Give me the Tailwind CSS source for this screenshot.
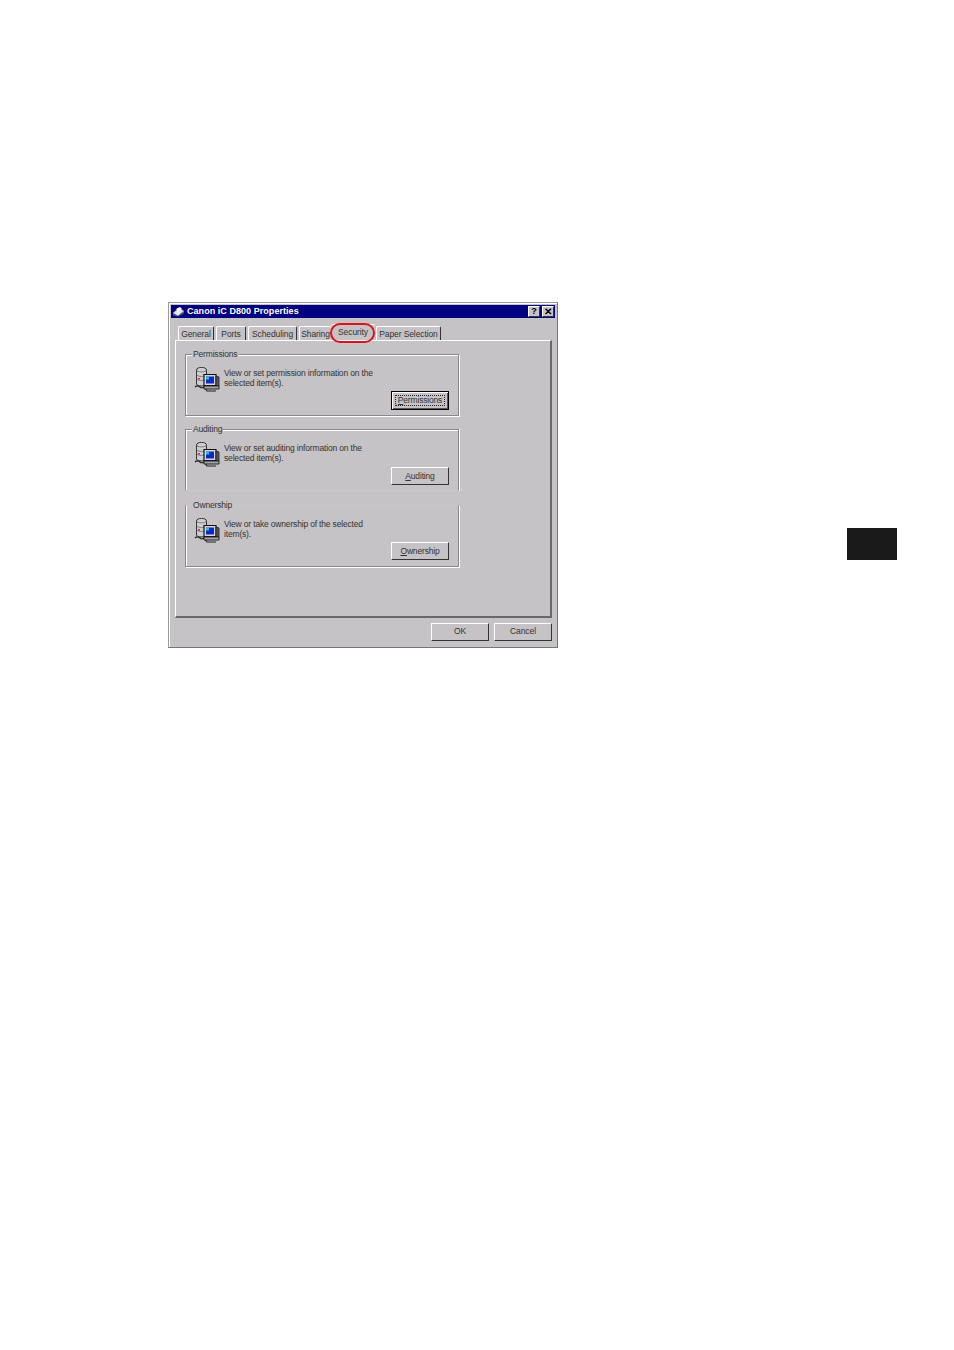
<!DOCTYPE html>
<html lang="en">
<head>
  <meta charset="UTF-8" />
  <meta name="viewport" content="width=device-width, initial-scale=1.0"/>
  <title>Canon iC D800 Properties</title>
  <script src="https://cdn.jsdelivr.net/npm/@tailwindcss/browser@4"></script>
</head>
<body class="bg-white font-['Liberation_Sans',sans-serif] text-[#333]">
  <svg class="hidden">
    <symbol id="sec" viewBox="0 0 26 26">
      <path d="M1 20c2-2 4-1 5 0s3 1 4 0l3 4h9" fill="none" stroke="#222" stroke-width="1.2"/>
      <path d="M2.500 3c0-3.500 10-3.500 10 0v14c0 2.500-10 2.500-10 0z" fill="#cfcdd1" stroke="#333" stroke-width="1"/>
      <path d="M2.500 3c0 2.500 10 2.500 10 0M2.500 8c3 2 7 2 10 0M2.500 12c3 2 7 2 10 0" fill="none" stroke="#666" stroke-width=".8"/>
      <rect x="4" y="11" width="2" height="1.500" fill="#c03050"/>
      <path d="M10 7.500h12v11H10z" fill="#d8d6da" stroke="#111" stroke-width="1.200"/>
      <rect x="12" y="9.500" width="8" height="7" fill="#0a28c8"/>
      <rect x="12" y="9.500" width="3" height="3" fill="#30b8d8"/>
      <path d="M22 9l3 1v9h-3z" fill="#555" stroke="#222" stroke-width=".8"/>
      <path d="M10 19h15v3H10z" fill="#a8a6aa" stroke="#222" stroke-width="1"/>
    </symbol>
  </svg>

  <div class="flex items-start w-[954px] h-[1350px] overflow-hidden">
    <!-- dialog -->
    <div class="mt-[302px] ml-[168px] w-[390px] h-[346px] shrink-0 bg-[#c5c3c6] border border-[#9a989c] border-r-[#77757a] border-b-[#77757a] shadow-[inset_1px_1px_0_#fff] p-[2px] pb-0">
      <div class="h-[13px] bg-[#000080] flex items-center pl-[1px] pr-[1px]">
        <svg class="w-[13px] h-[12px] mr-[2px]" viewBox="0 0 13 12">
          <path d="M1 7l6-5 5 3-6 5z" fill="#e8e8e8" stroke="#888" stroke-width=".7"/>
          <path d="M4 3l4-2 2 2-4 2z" fill="#fff"/>
          <path d="M1 8l5 3 6-5v1l-6 4-5-2z" fill="#8a9a50"/>
        </svg>
        <span class="text-white font-bold text-[9px] leading-none tracking-[0.05px]">Canon iC D800 Properties</span>
        <div class="ml-auto flex items-center">
          <span class="w-[12px] h-[11px] bg-[#c5c3c6] border border-white border-r-[#333] border-b-[#333] text-black font-bold text-[9px] leading-[9px] text-center">?</span>
          <span class="w-[12px] h-[11px] ml-[2px] bg-[#c5c3c6] border border-white border-r-[#333] border-b-[#333] text-black font-bold text-[10px] leading-[9px] text-center">✕</span>
        </div>
      </div>

      <div class="pl-[4px] pr-[3px]">
        <!-- tabs -->
        <div class="relative flex items-end h-[22px] pl-[3px] text-[8.5px] tracking-[-0.1px] leading-none whitespace-nowrap">
          <span class="w-[36px] h-[14px] mr-[2px] border-l border-t border-white border-r border-r-[#333] rounded-t-[2px] pt-[3px] text-center">General</span>
          <span class="w-[30px] h-[14px] mr-[2px] border-l border-t border-white border-r border-r-[#333] rounded-t-[2px] pt-[3px] text-center">Ports</span>
          <span class="w-[49px] h-[14px] mr-[2px] border-l border-t border-white border-r border-r-[#333] rounded-t-[2px] pt-[3px] text-center">Scheduling</span>
          <span class="w-[32px] h-[14px] border-l border-t border-white rounded-t-[2px] pt-[3px] text-center">Sharing</span>
          <span class="w-[44px] h-[16px] mr-[1px] border-t border-white rounded-t-[2px] pt-[3px] text-center">Security</span>
          <span class="w-[65px] h-[14px] border-l border-t border-white border-r border-r-[#333] rounded-t-[2px] pt-[3px] text-center">Paper Selection</span>
          <!-- red marker round the Security tab -->
          <span class="absolute left-[155px] top-[5px] w-[45px] h-[20px] rounded-full border-2 border-[#e0101c]"></span>
        </div>

        <!-- panel -->
        <div class="h-[278px] border-l border-t border-white border-r-2 border-r-[#6a686d] border-b-2 border-b-[#6a686d] pt-[13px] pl-[9px] flex flex-col text-[8.5px] tracking-[-0.17px] leading-[10px]">
          <div class="relative w-[274px] h-[62px] shrink-0 border border-[#8a888c] shadow-[inset_1px_1px_0_#fff,1px_1px_0_#fff]">
            <span class="absolute -top-[6px] left-[6px] px-[1px] bg-[#c5c3c6]">Permissions</span>
            <div class="flex pl-[8px] pt-[12px]">
              <svg class="w-[26px] h-[26px] shrink-0"><use href="#sec"/></svg>
              <p class="ml-[4px] mt-[1px]">View or set permission information on the<br>selected item(s).</p>
            </div>
            <div class="absolute left-[205px] top-[36px] w-[58px] h-[19px] border border-black bg-[#c5c3c6] shadow-[inset_1px_1px_0_#fff,inset_-1px_-1px_0_#55535a] p-[3px]">
              <div class="h-full border border-dotted border-[#222] text-center leading-[9px]"><u>P</u>ermissions</div>
            </div>
          </div>

          <div class="relative w-[274px] h-[62px] shrink-0 mt-[13px] border border-[#8a888c] border-b-[#c9c7cb] shadow-[inset_1px_1px_0_#fff,1px_0_0_#fff]">
            <span class="absolute -top-[6px] left-[6px] px-[1px] bg-[#c5c3c6]">Auditing</span>
            <div class="flex pl-[8px] pt-[12px]">
              <svg class="w-[26px] h-[26px] shrink-0"><use href="#sec"/></svg>
              <p class="ml-[4px] mt-[1px]">View or set auditing information on the<br>selected item(s).</p>
            </div>
            <div class="absolute left-[205px] top-[37px] w-[58px] h-[18px] border border-white border-r-[#333] border-b-[#333] bg-[#c5c3c6] text-center leading-[16px]"><u>A</u>uditing</div>
          </div>

          <div class="relative w-[274px] h-[62px] shrink-0 mt-[14px] border border-[#8a888c] border-t-[#c9c7cb] shadow-[inset_1px_0_0_#fff,1px_1px_0_#fff]">
            <span class="absolute -top-[6px] left-[6px] px-[1px]">Ownership</span>
            <div class="flex pl-[8px] pt-[12px]">
              <svg class="w-[26px] h-[26px] shrink-0"><use href="#sec"/></svg>
              <p class="ml-[4px] mt-[1px]">View or take ownership of the selected<br>item(s).</p>
            </div>
            <div class="absolute left-[205px] top-[36px] w-[58px] h-[18px] border border-white border-r-[#333] border-b-[#333] bg-[#c5c3c6] text-center leading-[16px]"><u>O</u>wnership</div>
          </div>
        </div>

        <!-- footer buttons -->
        <div class="flex justify-end gap-[5px] mt-[5px] text-[8.5px] tracking-[-0.1px]">
          <div class="w-[58px] h-[18px] border border-white border-r-[#333] border-b-[#333] text-center leading-[15px]">OK</div>
          <div class="w-[58px] h-[18px] border border-white border-r-[#333] border-b-[#333] text-center leading-[15px]">Cancel</div>
        </div>
      </div>
    </div>

    <!-- page thumb tab -->
    <div class="mt-[528px] ml-[289px] w-[50px] h-[32px] shrink-0 bg-[#1a1a1a]"></div>
  </div>
</body>
</html>
